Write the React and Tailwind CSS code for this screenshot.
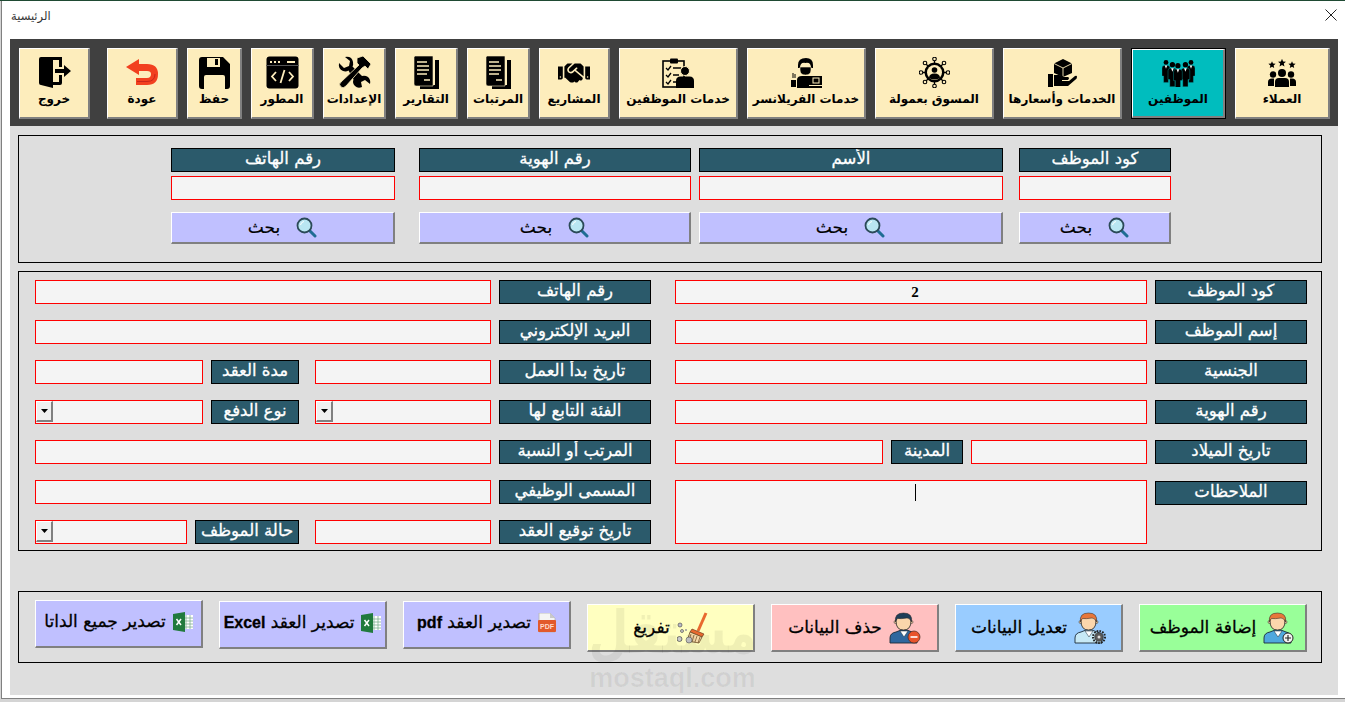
import React from "react";
import { FaHandshake } from "react-icons/fa";

const K = "#000";
const C = "#FDEDBC";

const Exit = () => (
  <svg width="33" height="33" viewBox="0 0 33 33">
    <path d="M1 3 Q1 1 3 1 H15 V32 L3 29 Q1 29 1 27 Z" fill={K} />
    <path d="M15 1 H24 V11 H21 V4 H15 Z M15 26 H21 V19 H24 V27 Q24 29 22 29 H15 Z" fill={K} />
    <path d="M17 13 H26 V9 L33 15 L26 21 V17 H17 Z" fill={K} />
  </svg>
);
const Undo = () => (
  <svg width="33" height="27" viewBox="0 0 33 27">
    <path d="M0 8 L13 0 V5 H21 Q32 5 32 15 Q32 26 21 26 H10 V19 H21 Q25 19 25 15 Q25 12 21 12 H13 V16 Z" fill="#F2401F" />
    <path d="M11 22.5 H21 Q29 22.5 29 15" stroke="#C9261A" strokeWidth="1" fill="none" />
  </svg>
);
const Save = () => (
  <svg width="31" height="32" viewBox="0 0 31 32">
    <path fillRule="evenodd" d="M3 0 H24 L31 7 V29 Q31 32 28 32 H3 Q0 32 0 29 V3 Q0 0 3 0 Z M8 1 V10 H21 V1 Z M5 32 V20 Q5 18 7 18 H24 Q26 18 26 20 V32 Z" fill={K} />
    <rect x="16" y="2" width="3" height="6" fill={K} />
  </svg>
);
const Code = () => (
  <svg width="33" height="33" viewBox="0 0 33 33">
    <rect x="0.5" y="0.5" width="32" height="32" rx="3" fill={K} />
    <rect x="4" y="5" width="2" height="2" fill={C} />
    <rect x="8" y="5" width="2" height="2" fill={C} />
    <rect x="12" y="5" width="2" height="2" fill={C} />
    <rect x="21" y="5" width="8" height="2" fill={C} />
    <rect x="0" y="9" width="33" height="1" fill="#555" />
    <path d="M10 16 L6 20.5 L10 25 M23 16 L27 20.5 L23 25 M18.5 14 L14.5 27" stroke={C} strokeWidth="1.8" fill="none" />
  </svg>
);
const Tools = () => (
  <svg width="33" height="33" viewBox="0 0 33 33">
    <path d="M1 7 L6 12 L11 10 L12 5 L7 1 Q14 0 15 6 Q15.500 9 14.500 10.500 L24 20 Q27 19 30 21 Q33 24 32 28 L27 24 L23 26 L24 31 Q20 33 17 30 Q14 27 15.500 23.500 L10.500 14.500 Q8 16 5 15 Q0 13 1 7 Z" fill={K} />
    <path d="M19 2 L25 0 L33 8 L30 13 L27 10 L24 12 L8 30 Q5 33 3 31 Q0 28 3 26 L21 9 L19 7 Z" fill={K} stroke={C} strokeWidth="0.8" />
  </svg>
);
const Doc = () => (
  <svg width="25" height="33" viewBox="0 0 25 33">
    <path d="M21 4 H25 V33 H6 V29 H21 Z" fill={K} />
    <path d="M1 0 H19 V30 H2 Q0 30 0 28 V1 Z" fill={K} stroke={C} strokeWidth="0.6" />
    <path d="M3 6 H13 M3 10 H15 M3 14 H15 M3 18 H13 M10 24 H16" stroke={C} strokeWidth="1.6" />
  </svg>
);
const Clip = () => (
  <svg width="32" height="30" viewBox="0 0 32 30">
    <rect x="1" y="3" width="21" height="26" fill="none" stroke={K} strokeWidth="1.6" />
    <rect x="8" y="0.500" width="8" height="5" rx="1" fill={K} />
    <path d="M4 10 L6 12 L9 8 M4 17 L6 19 L9 15 M4 24 L6 26 L9 22" stroke={K} strokeWidth="1.3" fill="none" />
    <path d="M11 10 H19 M11 17 H17 M11 24 H15" stroke={K} strokeWidth="1.5" />
    <circle cx="23" cy="13" r="4.500" fill={K} stroke={C} />
    <path d="M14 30 V23 Q14 18.500 18.500 18.500 H27.500 Q32 18.500 32 23 V30 Z" fill={K} />
  </svg>
);
const Freelancer = () => (
  <svg width="31" height="30" viewBox="0 0 31 30">
    <path d="M7 7 Q7 0 15 0 Q22 0 22 7 V10 H20 Q20 4 14.500 5 Q9 4 9 10 H7 Z" fill={K} />
    <path d="M9 9 H20 V12 Q20 17 14.500 17 Q9 17 9 12 Z" fill={K} stroke={C} strokeWidth="0.6" />
    <path d="M6 30 V22 Q6 18 11 18 H18 L18 30 Z" fill={K} />
    <rect x="18" y="18" width="13" height="9" fill={K} />
    <rect x="22" y="20" width="6" height="5" fill="none" stroke={C} />
    <rect x="14" y="28" width="17" height="2" fill={K} />
    <rect x="0" y="22" width="5" height="7" fill={K} />
    <path d="M2 15 V20 M4 16 V20" stroke={K} />
  </svg>
);
const Marketer = () => (
  <svg width="31" height="31" viewBox="0 0 31 31">
    <g stroke={K} strokeWidth="1.3" fill="none">
      <path d="M15.500 2 V29 M2 15.500 H29 M6 6 L25 25 M25 6 L6 25" />
    </g>
    <circle cx="15.500" cy="15.500" r="10" fill={K} />
    <circle cx="15.500" cy="15.500" r="7.500" fill={C} />
    <circle cx="15.500" cy="13" r="2.800" fill={K} />
    <path d="M10 21 Q10 16.500 15.500 16.500 Q21 16.500 21 21 Q15.500 24 10 21 Z" fill={K} />
    {[[15.5, 2], [15.5, 29], [2, 15.5], [29, 15.5], [6, 6], [25, 25], [25, 6], [6, 25]].map(([x, y], i) => (
      <circle key={i} cx={x} cy={y} r="1.800" fill={C} stroke={K} strokeWidth="1.1" />
    ))}
  </svg>
);
const Services = () => (
  <svg width="29" height="28" viewBox="0 0 29 28">
    <path d="M15 0 L24 4.500 V14 L15 18 L6 14 V4.500 Z" fill={K} />
    <path d="M6 4.500 L15 9 L24 4.500 M15 9 V18" stroke={C} strokeWidth="0.9" fill="none" />
    <rect x="0" y="15" width="5" height="13" fill={K} />
    <path d="M6 16 H11 Q14 16 16 18 H20 Q22 19 20 21 H14 V22 H21 L27 17 Q29 16 29 18 Q29 20 27 21 L20 27 H6 Z" fill={K} />
  </svg>
);
const Man = ({ x, y, s }) => (
  <g transform={`translate(${x} ${y}) scale(${s})`}>
    <circle cx="5" cy="3" r="3" fill={K} />
    <path d="M0 10 Q0 7 3 7 H7 Q10 7 10 10 V20 H8 V28 H2 V20 H0 Z" fill={K} stroke="#00BDBE" strokeWidth="0.4" />
    <path d="M3.500 7 L5 11 L6.500 7 Z" fill="#fff" />
  </g>
);
const Staff = () => (
  <svg width="33" height="28" viewBox="0 0 33 28">
    <Man x={0} y={1} s={0.8} />
    <Man x={25} y={1} s={0.8} />
    <Man x={6} y={3} s={0.88} />
    <Man x={19} y={3} s={0.88} />
    <Man x={11.5} y={4} s={0.88} />
  </svg>
);
const Star = ({ x, y, r }) => {
  const pts = [];
  for (let i = 0; i < 10; i++) {
    const a = -Math.PI / 2 + (i * Math.PI) / 5;
    const q = i % 2 ? r * 0.45 : r;
    pts.push(`${x + q * Math.cos(a)},${y + q * Math.sin(a)}`);
  }
  return <polygon points={pts.join(" ")} fill={K} />;
};
const Clients = () => (
  <svg width="28" height="28" viewBox="0 0 28 28">
    <Star x={4} y={6} r={3.800} />
    <Star x={14} y={4} r={4.200} />
    <Star x={24} y={6} r={3.800} />
    <circle cx="5" cy="15.500" r="3.200" fill={K} />
    <circle cx="23" cy="15.500" r="3.200" fill={K} />
    <circle cx="14" cy="14" r="4" fill={K} />
    <path d="M0 27 V23 Q0 19.500 4 19.500 H6 V27 Z M28 27 V23 Q28 19.500 24 19.500 H22 V27 Z" fill={K} />
    <path d="M7 28 V23 Q7 19 11 19 H17 Q21 19 21 23 V28 Z" fill={K} />
  </svg>
);
const Search = () => (
  <svg width="21" height="21" viewBox="0 0 21 21">
    <path d="M13 13 L19 19" stroke="#1F6C93" strokeWidth="3" strokeLinecap="round" />
    <circle cx="8.500" cy="8.500" r="7" fill="#B9E6F2" stroke="#2B4A58" strokeWidth="1.800" />
    <path d="M4.500 8 Q5 5 8 4.500" stroke="#fff" fill="none" />
  </svg>
);
const Excel = () => (
  <svg width="20" height="20" viewBox="0 0 20 20">
    <rect x="9" y="3" width="11" height="14" fill="#fff" />
    <path d="M13 3 V17 M17 3 V17 M9 6 H20 M9 9 H20 M9 12 H20 M9 15 H20" stroke="#7FAE8F" strokeWidth="0.8" />
    <path d="M0 2 L12 0 V20 L0 18 Z" fill="#217A3D" />
    <path d="M3.500 7 L8 13 M8 7 L3.500 13" stroke="#fff" strokeWidth="1.500" />
  </svg>
);
const Pdf = () => (
  <svg width="18" height="20" viewBox="0 0 18 20">
    <path d="M1 0 H12 L17 5 V19 H1 Z" fill="#F4F4F4" stroke="#B5B5B5" strokeWidth="0.8" />
    <path d="M12 0 V5 H17 Z" fill="#C9C9C9" />
    <rect x="0" y="7" width="18" height="12" rx="1" fill="#E2592B" />
    <text x="9" y="15.500" textAnchor="middle" fontSize="7" fontWeight="700" fill="#FFD9C9" fontFamily="Liberation Sans">PDF</text>
  </svg>
);
const Broom = () => (
  <svg width="31" height="32" viewBox="0 0 31 32">
    <path d="M29 1 L21 19" stroke="#E8692F" strokeWidth="3" />
    <path d="M15 17 L27 22 L25 25 L13 20 Z" fill="#E8692F" stroke="#5A2A10" strokeWidth="0.6" />
    <path d="M13 20 L25 25 L22 31 L10 29 Z" fill="#F6D9A8" stroke="#6B4A24" strokeWidth="0.8" />
    <path d="M14 22 L12 29 M17 23 L15 30 M20 24 L18 30 M23 25 L21 31" stroke="#6B4A24" strokeWidth="0.7" />
    <circle cx="2.500" cy="27" r="2.500" fill="#C9C9C9" stroke="#444" strokeWidth="0.7" />
    <circle cx="3" cy="13" r="2" fill="#B9B9C9" stroke="#555" strokeWidth="0.7" />
    <circle cx="5" cy="19" r="1.500" fill="#C9C9C9" stroke="#555" strokeWidth="0.7" />
    <circle cx="9" cy="18" r="1" fill="#999" />
    <circle cx="12" cy="28" r="3" fill="#C9C9C9" stroke="#555" strokeWidth="0.6" />
  </svg>
);
const Person = ({ hair, skin, body, children }) => (
  <svg width="32" height="32" viewBox="0 0 32 32">
    <path d="M1 31 V26 Q1 21 7 20 L12 18 H18 L23 20 Q28 21 28 26 V31 Z" fill={body} stroke="#1B2A38" strokeWidth="0.9" />
    <path d="M11 19 L15 25 L19 19 Z" fill="#fff" stroke="#1B2A38" strokeWidth="0.5" />
    <circle cx="6.500" cy="10" r="1.500" fill={skin} stroke="#222" strokeWidth="0.5" />
    <circle cx="22.500" cy="10" r="1.500" fill={skin} stroke="#222" strokeWidth="0.5" />
    <path d="M7 9 Q7 3 14.500 3 Q22 3 22 9 Q22 18 14.500 18 Q7 18 7 9 Z" fill={skin} stroke="#222" strokeWidth="0.8" />
    <path d="M6.500 10 Q5 1 14.500 1 Q24 1 22.500 10 Q21 6 18 6 Q12 7 8.500 6.500 Q7 8 6.500 10 Z" fill={hair} stroke="#222" strokeWidth="0.5" />
    {children}
  </svg>
);
const AddUser = () => (
  <Person hair="#E8773A" skin="#FBD6AC" body="#4FA8DE">
    <circle cx="25" cy="26" r="5" fill="#F2F2F2" stroke="#222" />
    <path d="M22 26 H28 M25 23 V29" stroke="#222" strokeWidth="1.100" />
  </Person>
);
const EditUser = () => (
  <Person hair="#E8773A" skin="#FBD6AC" body="#C7E9F6">
    <circle cx="25" cy="25" r="6" fill="none" stroke="#222" strokeWidth="2" strokeDasharray="1.600 1.200" />
    <circle cx="25" cy="25" r="4.300" fill="#5A5A5A" stroke="#222" strokeWidth="0.6" />
    <circle cx="25" cy="25" r="1.500" fill="#DDD" />
  </Person>
);
const DelUser = () => (
  <Person hair="#1F3E58" skin="#FBD6AC" body="#2F679E">
    <circle cx="25" cy="25" r="6" fill="#E8532B" stroke="#4A2A20" strokeWidth="0.7" />
    <path d="M21.500 25 H28.500" stroke="#fff" strokeWidth="1.600" />
  </Person>
);

const tools = [
  { t: "خروج", w: "w-[71px]", icon: <Exit />, cls: "mr-[8px]" },
  { t: "عودة", w: "w-[71px]", icon: <Undo /> },
  { t: "حفظ", w: "w-[55px]", icon: <Save /> },
  { t: "المطور", w: "w-[63px]", icon: <Code /> },
  { t: "الإعدادات", w: "w-[63px]", icon: <Tools /> },
  { t: "التقارير", w: "w-[63px]", icon: <Doc /> },
  { t: "المرتبات", w: "w-[63px]", icon: <Doc /> },
  { t: "المشاريع", w: "w-[71px]", icon: <FaHandshake size={32} color="#000" /> },
  { t: "خدمات الموظفين", w: "w-[119px]", icon: <Clip /> },
  { t: "خدمات الفريلانسر", w: "w-[119px]", icon: <Freelancer /> },
  { t: "المسوق بعمولة", w: "w-[119px]", icon: <Marketer /> },
  { t: "الخدمات وأسعارها", w: "w-[119px]", icon: <Services /> },
  { t: "الموظفين", w: "w-[95px]", icon: <Staff />, active: true },
  { t: "العملاء", w: "w-[95px]", icon: <Clients /> },
];

const bevel = "border-t border-l border-t-white border-l-white border-b-2 border-r-2 border-b-[#808080] border-r-[#808080]";

const Label = ({ children, w = "w-[152px]", cls = "" }) => (
  <div dir="rtl" className={`${w} ${cls} h-[24px] shrink-0 bg-[#2B5A6B] border border-black text-white text-[16.5px] leading-[20px] text-center whitespace-nowrap overflow-hidden [-webkit-text-stroke:0.3px]`}>
    {children}
  </div>
);
const Input = ({ w = "flex-1", children, cls = "" }) => (
  <div className={`${w} ${cls} h-[24px] bg-[#F4F4F4] border border-[#FF0000] flex items-center justify-center`}>{children}</div>
);
const Combo = ({ w }) => (
  <div className={`${w} h-[24px] bg-[#F4F4F4] border border-[#FF0000] flex`}>
    <div className="w-[17px] h-[21px] bg-[#EFEFEF] border-t border-l border-t-white border-l-white border-b-2 border-r-2 border-b-[#808080] border-r-[#808080] flex items-center justify-center">
      <svg width="7" height="4" viewBox="0 0 7 4"><path d="M0 0 H7 L3.500 4 Z" fill="#000" /></svg>
    </div>
  </div>
);
const Row = ({ children, cls = "" }) => <div className={`flex gap-[8px] ${cls}`}>{children}</div>;

const SearchCol = ({ w, title }) => (
  <div className={`${w} flex flex-col`}>
    <Label w="w-full">{title}</Label>
    <Input w="w-full" cls="mt-[4px]" />
    <button className={`mt-[12px] h-[32px] w-full bg-[#C0C0FF] ${bevel} flex items-center justify-center gap-[16px] text-[17px] text-black [-webkit-text-stroke:0.2px]`}>
      <span>بحث</span>
      <Search />
    </button>
  </div>
);

const Latin = ({ children }) => <span className="font-bold text-[16px] font-['Liberation_Sans',sans-serif]">{children}</span>;

const Action = ({ bg, mt, icon, children, cls = "" }) => (
  <button dir="rtl" className={`w-[168px] h-[48px] ${mt} ${cls} shrink-0 ${bg} ${bevel} flex items-center justify-center gap-[7px] text-[17px] text-black whitespace-nowrap [-webkit-text-stroke:0.3px]`}>
    {icon}
    <span>{children}</span>
  </button>
);

export default function App() {
  return (
    <div className="relative w-[1345px] h-[702px] overflow-hidden bg-[#D4D4D4] font-['DejaVu_Sans',sans-serif]">
      <div className="h-[1px] bg-[#1F4A33]" />
      <div className="h-[698px] ml-[1px] bg-white border-l border-l-[#808080] border-b border-b-[#808080] flex flex-col">
        <div className="h-[38px] shrink-0 flex items-center justify-between pl-[9px] pr-[8px]">
          <span dir="rtl" className="text-[11.5px] text-[#333] pb-[6px]">الرئيسية</span>
          <svg width="12" height="12" viewBox="0 0 12 12" className="mb-[11px]"><path d="M0.500 0.500 L11.500 11.500 M11.500 0.500 L0.500 11.500" stroke="#222" strokeWidth="1" /></svg>
        </div>
        <div className="ml-[8px] mr-[7px] flex flex-col">
          <div className="h-[87px] bg-[#404040] flex items-start gap-[9px] pl-[9px] pt-[9px]">
            {tools.map((b) => (
              <button
                key={b.t}
                className={`${b.w} ${b.cls || ""} h-[71px] shrink-0 ${b.active ? "border border-black" : ""}`}
              >
                <div
                  className={`w-full h-full flex flex-col items-center ${bevel} ${b.active ? "bg-[#00BDBE]" : "bg-[#FDEDBC]"}`}
                >
                  <div className={`h-[37px] ${b.active ? "mt-[4px]" : "mt-[5px]"} flex items-center justify-center`}>{b.icon}</div>
                  <span dir="rtl" className="text-[12px] font-bold leading-[16px] whitespace-nowrap text-black">{b.t}</span>
                </div>
              </button>
            ))}
          </div>
          <div className="h-[569px] bg-[#DEDEDE] pl-[8px] pr-[16px] pt-[9px]">
            <div className="h-[128px] border border-black pl-[152px] pt-[12px] flex">
              <SearchCol w="w-[224px] mr-[24px]" title="رقم الهاتف" />
              <SearchCol w="w-[272px] mr-[8px]" title="رقم الهوية" />
              <SearchCol w="w-[304px] mr-[16px]" title="الأسم" />
              <SearchCol w="w-[152px]" title="كود الموظف" />
            </div>
            <div className="mt-[8px] h-[280px] border border-black pl-[16px] pt-[8px] flex gap-[24px]">
              <div className="w-[616px] flex flex-col gap-[16px]">
                <Row><Input /><Label>رقم الهاتف</Label></Row>
                <Row><Input /><Label>البريد الإلكتروني</Label></Row>
                <Row><Input w="w-[168px]" /><Label w="w-[88px]" cls="mr-[8px]">مدة العقد</Label><Input w="w-[176px]" /><Label>تاريخ بدأ العمل</Label></Row>
                <Row><Combo w="w-[168px]" /><Label w="w-[88px]" cls="mr-[8px]">نوع الدفع</Label><Combo w="w-[176px]" /><Label>الفئة التابع لها</Label></Row>
                <Row><Input /><Label>المرتب أو النسبة</Label></Row>
                <Row><Input /><Label>المسمى الوظيفي</Label></Row>
                <Row><Combo w="w-[152px]" /><Label w="w-[104px]" cls="mr-[8px]">حالة الموظف</Label><Input w="w-[176px]" /><Label>تاريخ توقيع العقد</Label></Row>
              </div>
              <div className="w-[632px] flex flex-col gap-[16px]">
                <Row><Input><span className="pl-[8px] text-[15px] font-bold font-['Liberation_Serif',serif]">2</span></Input><Label>كود الموظف</Label></Row>
                <Row><Input /><Label>إسم الموظف</Label></Row>
                <Row><Input /><Label>الجنسية</Label></Row>
                <Row><Input /><Label>رقم الهوية</Label></Row>
                <Row><Input w="w-[208px]" /><Label w="w-[72px]">المدينة</Label><Input w="w-[176px]" /><Label>تاريخ الميلاد</Label></Row>
                <Row>
                  <div className="relative flex-1 h-[64px] bg-[#F4F4F4] border border-[#FF0000]">
                    <div className="absolute left-[239px] top-[3px] w-[1px] h-[17px] bg-black" />
                  </div>
                  <Label cls="mt-[1px]">الملاحظات</Label>
                </Row>
              </div>
            </div>
            <div className="mt-[40px] h-[72px] border border-black pl-[16px] flex gap-[16px] items-start">
              <Action bg="bg-[#C0C0FF]" mt="mt-[8px]" cls="pb-[3px]" icon={<Excel />}>تصدير جميع الداتا</Action>
              <Action bg="bg-[#C0C0FF]" mt="mt-[9px]" cls="pb-[3px]" icon={<Excel />}>تصدير العقد <Latin>Excel</Latin></Action>
              <Action bg="bg-[#C0C0FF]" mt="mt-[9px]" cls="pb-[3px]" icon={<Pdf />}>تصدير العقد <Latin>pdf</Latin></Action>
              <Action bg="bg-[#FFFFC0]" mt="mt-[12px]" icon={<Broom />}>تفريغ</Action>
              <Action bg="bg-[#FFC0C0]" mt="mt-[12px]" icon={<DelUser />}>حذف البيانات</Action>
              <Action bg="bg-[#99CCFF]" mt="mt-[12px]" icon={<EditUser />}>تعديل البيانات</Action>
              <Action bg="bg-[#99FF99]" mt="mt-[12px]" icon={<AddUser />}>إضافة الموظف</Action>
            </div>
          </div>
        </div>
      </div>
      <div className="absolute left-[590px] top-[600px] w-[165px] flex flex-col items-center pointer-events-none text-black/[0.06] font-bold">
        <span dir="rtl" className="text-[46px] leading-[64px] whitespace-nowrap scale-y-[1.3]">مستقل</span>
        <span className="text-[27px] leading-[28px] font-['Liberation_Sans',sans-serif]">mostaql.com</span>
      </div>
    </div>
  );
}
